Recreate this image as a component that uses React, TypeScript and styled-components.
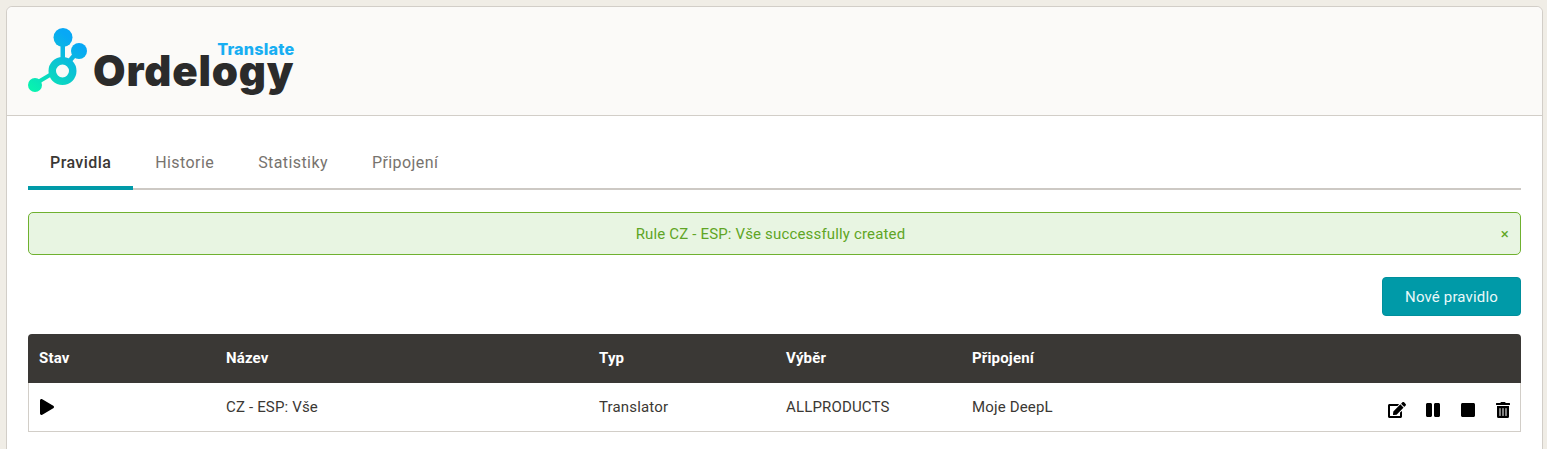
import React from 'react';
import styled, {createGlobalStyle} from 'styled-components';
import {FaEdit, FaPause, FaPlay, FaStop, FaTrashAlt} from 'react-icons/fa';

const TABS = ['Pravidla', 'Historie', 'Statistiky', 'Připojení'];
const COLUMNS = ['Stav', 'Název', 'Typ', 'Výběr', 'Připojení'];

const GlobalStyle = createGlobalStyle`
  html, body {
    margin: 0;
    background: #f0ede6;
    font-family: Roboto, 'Liberation Sans', sans-serif;
    font-size: 15px;
    letter-spacing: 0.16px;
  }
  * { box-sizing: border-box; }
`;

const Page = styled.div`
  padding: 6px 4px 0 6px;
  height: 449px;
  overflow: hidden;
`;

const Card = styled.div`
  background: #fff;
  border: 1px solid #d2cec8;
  border-radius: 6px 6px 0 0;
  height: 460px;
`;

const Header = styled.header`
  display: flex;
  align-items: flex-start;
  height: 109px;
  padding: 20px 0 0 20px;
  background: #fbfaf8;
  border-bottom: 1px solid #d2cec8;
  border-radius: 6px 6px 0 0;
`;

const Logo = styled.div`
  display: flex;
  align-items: flex-start;
`;

const LogoWords = styled.div`
  display: flex;
  flex-direction: column;
  align-items: flex-end;
  margin: 14px 0 0 -2px;
`;

const LogoProduct = styled.span`
  font-family: Inter, sans-serif;
  font-weight: 800;
  font-size: 16.2px;
  line-height: 16px;
  letter-spacing: 0.2px;
  color: #18aef2;
`;

const LogoName = styled.span`
  font-family: Inter, sans-serif;
  font-weight: 900;
  font-size: 42px;
  line-height: 42px;
  letter-spacing: 0.85px;
  color: #2b2b2b;
  margin-top: -7px;
`;

const Content = styled.main`
  padding: 26px 21px 0;
`;

const TabBar = styled.nav`
  display: flex;
  height: 48px;
  border-bottom: 2px solid #cdc9c4;
`;

const Tab = styled.div<{$active?: boolean}>`
  height: 48px;
  padding: 0 22px;
  line-height: 42px;
  font-size: 16px;
  letter-spacing: 0.42px;
  font-weight: ${p => (p.$active ? 500 : 400)};
  color: ${p => (p.$active ? '#3b3834' : '#77736e')};
  border-bottom: ${p => (p.$active ? '4px solid #009aa8' : 'none')};
`;

const Alert = styled.div`
  position: relative;
  display: flex;
  align-items: center;
  justify-content: center;
  height: 43px;
  margin-top: 22px;
  padding-right: 8px;
  background: #e8f5e2;
  border: 1px solid #6fb12f;
  border-radius: 5px;
  color: #5fa525;
`;

const AlertClose = styled.span`
  position: absolute;
  right: 11px;
  top: 13px;
  font-size: 15px;
  line-height: 16px;
  color: #5fa525;
`;

const Toolbar = styled.div`
  display: flex;
  justify-content: flex-end;
  margin: 22px 0 18px;
`;

const PrimaryButton = styled.button`
  width: 139px;
  height: 39px;
  padding: 0;
  background: #009aa8;
  border: 1px solid #008f9c;
  border-radius: 4px;
  color: #e9f8f9;
  font: inherit;
  letter-spacing: inherit;
`;

const TableRow = styled.div`
  display: grid;
  grid-template-columns: 187px 373px 187px 186px 1fr auto;
  align-items: center;
  height: 49px;
`;

const TableHead = styled(TableRow)`
  padding-bottom: 2px;
  background: #3a3835;
  border-radius: 4px 4px 0 0;
  color: #fff;
  font-weight: 700;
`;

const TableBody = styled(TableRow)`
  border: 1px solid #d2cec8;
  border-top: none;
  color: #3b3834;
`;

const Cell = styled.div`
  padding-left: 11px;
`;

const BodyCell = styled(Cell)`
  &:not(:first-child) {
    margin-left: -1px;
  }
`;

const StatusCell = styled(Cell)`
  padding-left: 10px;
  height: 16px;
  margin-top: -1px;
  color: #000;
  font-size: 16px;
  line-height: 16px;
`;

const Actions = styled.div`
  display: flex;
  gap: 19px;
  align-items: center;
  padding: 6px 9px 0 0;
  color: #000;
  font-size: 16px;
  svg { display: block; }
`;

const LogoMark = () => (
  <svg width="68" height="72" viewBox="0 0 68 72" aria-hidden="true">
    <defs>
      <linearGradient id="mark" gradientUnits="userSpaceOnUse" x1="6" y1="62" x2="44" y2="12">
        <stop offset="0" stopColor="#08f2b0" />
        <stop offset="0.5" stopColor="#0cc9cc" />
        <stop offset="1" stopColor="#08a8f5" />
      </linearGradient>
    </defs>
    <g fill="url(#mark)" stroke="none">
      <circle cx="36" cy="10.5" r="9.5" />
      <rect x="33.5" y="17" width="4.5" height="15" />
      <circle cx="52" cy="24" r="8" />
      <path d="M45.5 27l3.5 3-6.5 7.5-3.5-3z" />
      <circle cx="8" cy="58" r="7" />
      <path d="M10.5 53l13.5-8 2 3.4-13.5 8z" />
      <path
        fillRule="evenodd"
        d="M35.5 30a14 14 0 1 1 0 28a14 14 0 1 1 0-28zm0 7.5a6.5 6.5 0 1 0 0 13a6.5 6.5 0 1 0 0-13z"
      />
    </g>
  </svg>
);

const App: React.FC = () => (
  <Page>
    <GlobalStyle />
    <Card>
      <Header>
        <Logo>
          <LogoMark />
          <LogoWords>
            <LogoProduct>Translate</LogoProduct>
            <LogoName>Ordelogy</LogoName>
          </LogoWords>
        </Logo>
      </Header>
      <Content>
        <TabBar>
          {TABS.map((tab, i) => (
            <Tab key={tab} $active={i === 0}>
              {tab}
            </Tab>
          ))}
        </TabBar>
        <Alert>
          Rule CZ - ESP: Vše successfully created
          <AlertClose>×</AlertClose>
        </Alert>
        <Toolbar>
          <PrimaryButton>Nové pravidlo</PrimaryButton>
        </Toolbar>
        <TableHead>
          {COLUMNS.map(col => (
            <Cell key={col}>{col}</Cell>
          ))}
        </TableHead>
        <TableBody>
          <StatusCell>
            <FaPlay />
          </StatusCell>
          <BodyCell>CZ - ESP: Vše</BodyCell>
          <BodyCell>Translator</BodyCell>
          <BodyCell>ALLPRODUCTS</BodyCell>
          <BodyCell>Moje DeepL</BodyCell>
          <Actions>
            <FaEdit size={18} />
            <FaPause />
            <FaStop />
            <FaTrashAlt />
          </Actions>
        </TableBody>
      </Content>
    </Card>
  </Page>
);

export default App;
